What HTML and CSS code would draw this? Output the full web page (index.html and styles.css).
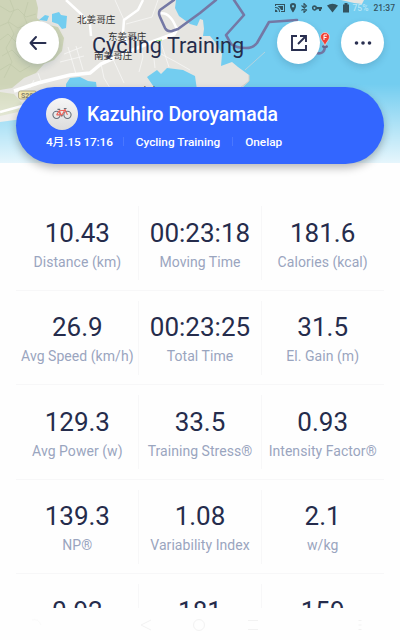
FILE: index.html
```
<!DOCTYPE html>
<html lang="en">
<head>
  <meta charset="UTF-8">
  <title>Cycling Training</title>
  <link rel="stylesheet" href="styles.css">
</head>
<body>
  <!-- MAP HEADER -->
  <div class="top">
    <svg class="map" width="400" height="163" viewBox="0 0 400 163">
      <defs>
        <linearGradient id="fade" x1="0" y1="0" x2="0" y2="1">
          <stop offset="0" stop-color="#fff" stop-opacity="0"/>
          <stop offset="1" stop-color="#fff" stop-opacity="0.82"/>
        </linearGradient>
      </defs>
      <rect width="400" height="163" fill="#73cdf0"/>
      <!-- land -->
      <path d="M0 0H176L175 8L179 16L190 24L197 26L200 19L203 20L204 29L203 36L210 36L215 42L222 54L221 66L232 62L238 67L249 75L249 81L240 90L190 90L60 100L30 118L0 122Z" fill="#e6e5e1"/>
      <path d="M341 0H364L362 4L354 3Z" fill="#e6e5e1"/>
      <path d="M249 75L249 81L240 88" stroke="#d2cfc8" fill="none"/>
      <!-- hills -->
      <path d="M0 0H36L38 8L37 18L44 24L58 27L64 38L62 51L54 60L44 64L36 73L24 78L12 88L0 90Z" fill="#ced4b7"/>
      <path d="M0 92L14 94L22 103L18 112L0 116Z" fill="#d4dabd"/>
      <g fill="none" stroke="#c0c8a9" stroke-width=".7">
        <path d="M0 6L10 12L18 9L26 17L36 14M0 26L9 22L18 28L28 24M0 40L8 34L16 42M2 56L12 50L20 58M0 70L10 64L20 72L30 66M10 0L14 10L8 22L14 34L6 48L12 62L4 78M28 2L24 16L28 26"/>
      </g>
      <!-- lakes -->
      <path d="M39 20L45 15L49 16L47 21ZM52 14L59 12L61 15L67 16L66 28L62 29L58 24L52 22Z" fill="#73cdf0"/>
      <path d="M147 77L157 70L161 74L167 68L183 70L195 76L197 90H156ZM66 84L70 78L80 77L88 81L96 82L97 90H66Z" fill="#73cdf0"/>
      <!-- roads -->
      <g fill="none" stroke="#fff">
        <path d="M14 91L38 83L70 75L90 73L101 64L130 51L152 42L174 34L178 27" stroke-width="3.500"/>
        <path d="M66 0L80 13L90 24L91 36M143 0L138 10L124 20L123 33L127 44M0 112L22 106L50 92M158 14Q170 10 177 30" stroke-width="2.500"/>
        <path d="M126 24L152 17L158 0M92 40L122 38M140 42L143 57L139 72M152 42L155 68M101 64L104 78L110 88M113 59L124 83M64 54L82 47M60 62L84 56M68 47L76 74M76 46L83 70M30 88L34 80M42 84L38 73M115 0L124 20M150 48L176 62L190 70M160 40L169 67" stroke-width=".8" stroke-opacity=".7"/>
      </g>
      <path d="M156 41L162 40" stroke="#8edb77" fill="none"/>
      <!-- route -->
      <g fill="none" stroke="#7478a5" stroke-width="2.600" stroke-linejoin="round" stroke-linecap="round">
        <path d="M174 0L160 10Q158 13 160 17L165 28Q167 32 172 31L178 29L200 13L216 0"/>
        <path d="M234 0L244 15L226 35L231 44Q236 48 246 48Q253 48 257 43L269 22L297 20M316 53Q324 55 325 47"/>
      </g>
      <path d="M245 70L265 52" stroke="#b3d3df"/>
      <!-- place names -->
      <g class="place">
        <text x="77" y="22.500">北姜哥庄</text>
        <text x="108" y="40">东姜哥庄</text>
        <text x="94" y="59">南姜哥庄</text>
        <text x="140" y="94">南岛</text>
      </g>
      <rect x="18.500" y="91" width="18" height="8" rx="2" fill="#f1e5a4" stroke="#a7a27f"/>
      <text x="21" y="98" class="road-no">S29</text>
      <rect y="84" width="400" height="79" fill="url(#fade)"/>
      <!-- finish pin -->
      <ellipse cx="325" cy="46.500" rx="3" ry="1.500" fill="#646b91"/>
      <path d="M325 46C324 42 320.500 40 320.500 37a4.500 4.500 0 1 1 9 0C329.500 40 326 42 325 46Z" fill="#f34035" stroke="#fff" stroke-width=".5"/>
      <path d="M324 40V35H327M324 37.500H326.500" fill="none" stroke="#fff"/>
    </svg>

    <!-- STATUS BAR -->
    <div class="status">
      <svg width="76" height="10" viewBox="0 0 76 10" fill="#33535f">
        <path d="M0 1H10V9H6V8H9V2H1V3H0ZM0 4Q5 4 5 9H4Q4 5 0 5ZM0 6.500Q2.500 6.500 2.500 9H0ZM3 3H8V7H6Q5 4 3 3.500Z"/>
        <path d="M18 0a3 3 0 0 1 3 3.200C21 5.500 18 9.500 18 9.500S15 5.500 15 3.200A3 3 0 0 1 18 0ZM18 2a1.200 1.200 0 1 0 .1 0Z" fill-rule="evenodd"/>
        <path d="M26.500 2.500L31.500 7L29 9.500V.5L31.500 3L26.500 7.500" fill="none" stroke="#33535f" stroke-width="1.100"/>
        <path d="M39.500 2.200a2.700 2.700 0 1 0 2.400 4H44V8H46V6.200H47V4H42A2.700 2.700 0 0 0 39.500 2.200ZM39.500 4a1 1 0 1 1-.1 0Z" fill-rule="evenodd"/>
        <path d="M52 2.500Q57.500-1 63 2.500L57.500 9.500Z"/>
        <path d="M68 1.500H69.500V0H72.500V1.500H74V9.500H68Z"/>
      </svg>
      <span class="battery">75%</span>
      <span>21:37</span>
    </div>

    <!-- TITLE BAR -->
    <div class="nav">
      <div class="round">
        <svg width="20" height="16" viewBox="0 0 20 16" fill="none" stroke="#292f50" stroke-width="2" stroke-linecap="round" stroke-linejoin="round">
          <path d="M17.500 8H2.500M8 2L2.500 8L8 14"/>
        </svg>
      </div>
      <h1 class="title">Cycling Training</h1>
      <div class="round share">
        <svg width="18" height="18" viewBox="0 0 18 18" fill="none" stroke="#292f50" stroke-width="1.900">
          <path d="M7 2H2V16H16V11M10 2H16V8M16 2L8 10"/>
        </svg>
      </div>
      <div class="round">
        <svg width="18" height="4" viewBox="0 0 18 4" fill="#292f50">
          <circle cx="2.500" cy="2" r="1.800"/>
          <circle cx="9" cy="2" r="1.800"/>
          <circle cx="15.500" cy="2" r="1.800"/>
        </svg>
      </div>
    </div>

    <!-- RIDER CARD -->
    <div class="card">
      <div class="rider">
        <div class="avatar">
          <svg width="20" height="13" viewBox="0 0 22 14" fill="none">
            <circle cx="5" cy="8.500" r="4" stroke="#67717b" stroke-width="1.200"/>
            <circle cx="17" cy="8.500" r="4" stroke="#67717b" stroke-width="1.200"/>
            <path d="M5 8.500L8 4L14 3.500L10.500 9.500L8 4M5 8.500H10.500M17 8.500L14 2" stroke="#ed6157" stroke-width="1.200"/>
            <path d="M6 2.500H9M13 1.500H16M10 9.500H12" stroke="#67717b" stroke-width="1.200"/>
          </svg>
        </div>
        <span class="name">Kazuhiro Doroyamada</span>
      </div>
      <div class="meta">
        <span class="date">4月.15 17:16</span>
        <i class="sep"></i>
        <span>Cycling Training</span>
        <i class="sep"></i>
        <span>Onelap</span>
      </div>
    </div>
  </div>

  <!-- STATS -->
  <div class="stats">
    <div class="stat"><b>10.43</b><span>Distance (km)</span></div>
    <div class="stat"><b>00:23:18</b><span>Moving Time</span></div>
    <div class="stat"><b>181.6</b><span>Calories (kcal)</span></div>
    <div class="stat"><b>26.9</b><span>Avg Speed (km/h)</span></div>
    <div class="stat"><b>00:23:25</b><span>Total Time</span></div>
    <div class="stat"><b>31.5</b><span>El. Gain (m)</span></div>
    <div class="stat"><b>129.3</b><span>Avg Power (w)</span></div>
    <div class="stat"><b>33.5</b><span>Training Stress®</span></div>
    <div class="stat"><b>0.93</b><span>Intensity Factor®</span></div>
    <div class="stat"><b>139.3</b><span>NP®</span></div>
    <div class="stat"><b>1.08</b><span>Variability Index</span></div>
    <div class="stat"><b>2.1</b><span>w/kg</span></div>
    <div class="stat"><b>0.92</b></div>
    <div class="stat"><b>181</b></div>
    <div class="stat"><b>159</b></div>
  </div>

  <!-- SYSTEM NAVIGATION -->
  <svg class="system-nav" width="400" height="32" viewBox="0 0 400 32" fill="none" stroke="#f2f2f2">
    <path d="M151 12L141 17L151 22"/>
    <circle cx="199" cy="17" r="5.500"/>
    <path d="M248 12.500H258M248 21.500H258"/>
    <path d="M358.500 12.500H361.500M358.500 17H361.500M358.500 21.500H361.500"/>
    <path d="M32 12Q38 10 41 17" stroke="#fafafa"/>
  </svg>
</body>
</html>
```
FILE: styles.css
```
body {
  display: flex;
  flex-direction: column;
  width: 400px;
  height: 640px;
  margin: 0;
  overflow: hidden;
  background-color: #fefefe;
  font-family: Roboto, "Noto Sans CJK SC", sans-serif;
  color: #252c4c;
}

svg {
  display: block;
}

.top {
  position: relative;
  flex: none;
  height: 163px;
}

/* everything in the header lies over the map */
.map {
  position: absolute;
  top: 0;
  left: 0;
  z-index: -1;
}

.place {
  font: 9.6px "Noto Sans CJK SC", sans-serif;
  fill: #333;
}

.road-no {
  font: bold 7px Roboto, sans-serif;
  fill: #77735c;
}

.status {
  display: flex;
  justify-content: flex-end;
  align-items: center;
  height: 16px;
  padding-right: 5px;
  font-size: 8.5px;
  font-weight: 500;
  color: #33535f;
}

.status svg {
  margin-right: 2px;
}

.battery {
  margin-right: 5px;
  color: #b9e6f6;
}

.nav {
  display: flex;
  align-items: center;
  height: 53px;
  padding: 0 16px;
}

.round {
  display: flex;
  flex: none;
  align-items: center;
  justify-content: center;
  width: 43px;
  height: 43px;
  border-radius: 50%;
  background-color: #fff;
  box-shadow: 0 3px 7px rgba(30, 60, 90, 0.18);
}

.share {
  margin-right: 21px;
}

.title {
  flex: 1;
  margin: 6px 0 0 33px;
  font-size: 21.6px;
  font-weight: 400;
  line-height: 26px;
  white-space: nowrap;
}

.card {
  box-sizing: border-box;
  height: 77px;
  margin: 18px 16px 0;
  padding: 10px 30px 0;
  border-radius: 39px;
  background-color: #3366ff;
  box-shadow: 0 4px 9px rgba(0, 0, 0, 0.27);
  color: #fff;
}

.rider {
  display: flex;
  align-items: center;
  height: 33px;
}

.avatar {
  display: flex;
  align-items: center;
  justify-content: center;
  width: 32px;
  height: 32px;
  border-radius: 50%;
  background: linear-gradient(#f6f6f6, #dcdcdc);
}

.name {
  margin: 1px 0 0 9px;
  font-size: 19.4px;
  font-weight: 500;
}

.meta {
  display: flex;
  align-items: baseline;
  height: 18px;
  margin-top: 3px;
  font-size: 11.8px;
  font-weight: 500;
  line-height: 18px;
}

.date {
  letter-spacing: -0.12px;
}

.sep {
  width: 1px;
  height: 9px;
  margin: 0 12px;
  background-color: #4a77ff;
}

.date + .sep {
  margin-left: 10px;
}

.stats {
  display: grid;
  flex: none;
  grid-template-columns: repeat(3, 1fr);
  grid-auto-rows: 94.5px;
  height: 412px;
  margin: 33px 16px 0;
  overflow: hidden;
}

.stat {
  position: relative;
  display: flex;
  flex-direction: column;
  align-items: center;
  box-sizing: border-box;
  padding-top: 20.6px;
  border-bottom: 1px solid #f7f7f8;
  white-space: nowrap;
}

/* short divider between columns */
.stat:not(:nth-child(3n))::after {
  content: "";
  position: absolute;
  top: 10px;
  right: -0.5px;
  width: 1px;
  height: 74px;
  background-color: #f7f7f8;
}

.stat b {
  font-size: 26px;
  font-weight: 400;
  line-height: 32px;
}

.stat span {
  margin-top: 3.4px;
  font-size: 14px;
  line-height: 20px;
  letter-spacing: 0.05px;
  color: #9aa5bf;
}

.system-nav {
  flex: none;
}
```
